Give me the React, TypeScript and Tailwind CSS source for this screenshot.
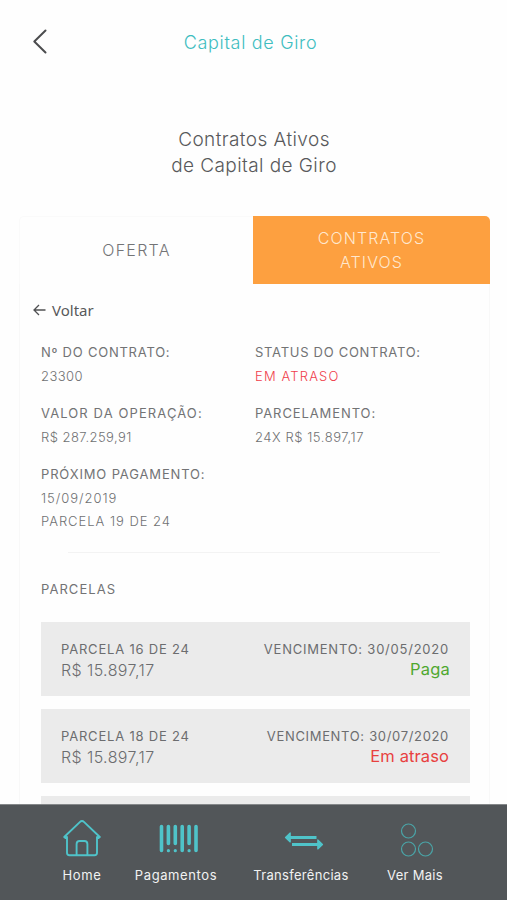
import { ReactNode } from 'react';

interface Installment {
  number: number;
  amount: string;
  dueDate: string;
  status: string;
  statusClass: string;
  dueClass: string;
}

const installments: Installment[] = [
  {
    number: 16,
    amount: 'R$ 15.897,17',
    dueDate: '30/05/2020',
    status: 'Paga',
    statusClass: 'text-[#4fa82f] tracking-[0.2px] -mr-px',
    dueClass: 'tracking-[0.77px]',
  },
  {
    number: 18,
    amount: 'R$ 15.897,17',
    dueDate: '30/07/2020',
    status: 'Em atraso',
    statusClass: 'text-[#e8403f] tracking-[0.1px]',
    dueClass: 'tracking-[0.67px]',
  },
];

interface FieldProps {
  label: string;
  labelClass: string;
  valueClass: string;
  children: ReactNode;
}

function Field({ label, labelClass, valueClass, children }: FieldProps) {
  return (
    <div>
      <p className={`mb-[2px] text-[13px] leading-[22px] text-[#727375] ${labelClass}`}>{label}</p>
      <div className={`text-[13px] leading-[23px] font-light text-[#707173] ${valueClass}`}>{children}</div>
    </div>
  );
}

function HomeIcon() {
  return (
    <svg width="38" height="38" viewBox="0 0 38 38" fill="none" stroke="#4fc3c9" strokeWidth="1.9" strokeLinecap="round" strokeLinejoin="round">
      <path d="M4 17 2.500 18.100 1.200 17 16.800 2.100a3.200 3.200 0 0 1 4.400 0L36.800 17 35.500 18.100 34 17V32.700a2.500 2.500 0 0 1-2.500 2.500H6.500A2.500 2.500 0 0 1 4 32.700z" />
      <path d="M13.600 35V24a3 3 0 0 1 3-3h4.800a3 3 0 0 1 3 3v11" />
    </svg>
  );
}

function BarcodeIcon() {
  return (
    <svg className="ml-[5px]" width="40" height="30" viewBox="0 0 40 30" fill="none" stroke="#4fc3c9" strokeWidth="3.600" strokeLinecap="round">
      <path d="M2.500 2.500v24M9.400 2.500v17M16.300 2.500v17M23.200 2.500v24M30.100 2.500v17M37 2.500v24" />
      <path d="M9.400 26.600v.1M16.300 26.600v.1M30.100 26.600v.1" strokeWidth="3.200" />
    </svg>
  );
}

function TransferIcon() {
  return (
    <svg className="mt-[4px] ml-[6px]" width="40" height="18" viewBox="0 0 40 18" fill="none" stroke="#4fc3c9" strokeWidth="2.800">
      <path d="M5 5.500h27.500M8 12.500h27" />
      <path d="M1.500 5.500 6.200 1v9zM38.500 12.500l-4.700-4.500v9z" fill="#4fc3c9" strokeWidth="1.200" strokeLinejoin="round" />
    </svg>
  );
}

function MoreIcon() {
  return (
    <svg className="mt-[2px] ml-[3px]" width="34" height="34" viewBox="0 0 34 34" fill="none" stroke="#4aa4a7" strokeWidth="1.200">
      <circle cx="8.500" cy="8" r="7" />
      <circle cx="8.500" cy="26" r="7" />
      <circle cx="25.500" cy="26" r="7" />
    </svg>
  );
}

const navItems = [
  { label: 'Home', icon: <HomeIcon />, className: 'w-[40px] ml-[62px] tracking-[0.6px]' },
  { label: 'Pagamentos', icon: <BarcodeIcon />, className: 'w-[84px] ml-[32px] tracking-[0.6px]' },
  { label: 'Transferências', icon: <TransferIcon />, className: 'w-[96px] ml-[35px] tracking-[0.3px]' },
  { label: 'Ver Mais', icon: <MoreIcon />, className: 'w-[58px] ml-[37px] tracking-[0.3px]' },
];

export default function App() {
  return (
    <div className="flex h-[900px] w-full flex-col overflow-hidden bg-[#fefefe] font-['Inter',sans-serif]">
      {/* Header */}
      <header className="grid h-[84px] shrink-0 grid-cols-[60px_1fr_66px] items-center">
        <button aria-label="Voltar" className="pl-[32px]">
          <svg width="16" height="26" viewBox="0 0 16 26" fill="none" stroke="#4b4c4e" strokeWidth="2" strokeLinecap="round" strokeLinejoin="round">
            <path d="M13.500 1.500 2.300 12.500l11.200 11" />
          </svg>
        </button>
        <h1 className="pt-px text-center text-[18px] font-light tracking-[0.68px] text-[#40bdc0]">Capital de Giro</h1>
      </header>

      <h2 className="mt-[43px] pl-px text-center text-[19px] leading-[26px] font-light tracking-[0.42px] text-[#58595b]">
        Contratos Ativos
        <br />
        de Capital de Giro
      </h2>

      {/* Tabs */}
      <div className="mr-[17px] mt-[37px] ml-[19px] grid h-[68px] shrink-0 grid-cols-[234px_1fr] text-[16px] font-light">
        <button className="rounded-tl-[5px] border-t border-l border-[#fafafa] pb-px tracking-[1.3px] text-[#737476]">OFERTA</button>
        <button className="rounded-tr-[5px] bg-[#fda040] leading-[24px] tracking-[1.1px] text-[#ffe8cf]">
          CONTRATOS
          <br />
          ATIVOS
        </button>
      </div>

      <main className="mr-[17px] ml-[19px] flex-1 overflow-hidden border-x border-[#f8f8f8]">
        <button className="mt-[15px] ml-[13px] flex h-[22px] items-center gap-[6px] font-['Noto_Sans',sans-serif] text-[15px] text-[#58595b]">
          <svg width="13" height="12" viewBox="0 0 13 12" fill="none" stroke="#505153" strokeWidth="1.300">
            <path d="M12.500 6H1M6 1 1 6l5 5" />
          </svg>
          Voltar
        </button>

        {/* Contract data */}
        <section className="mt-[20px] ml-[21px] grid grid-cols-[214px_1fr] gap-y-[14px]">
          <Field label="Nº DO CONTRATO:" labelClass="tracking-[0.77px]" valueClass="tracking-[0.45px]">
            23300
          </Field>
          <Field label="STATUS DO CONTRATO:" labelClass="tracking-[0.72px]" valueClass="tracking-[1.15px]">
            <span className="text-[#f03d4b]">EM ATRASO</span>
          </Field>
          <Field label="VALOR DA OPERAÇÃO:" labelClass="tracking-[1.1px]" valueClass="tracking-[0.45px]">
            R$ 287.259,91
          </Field>
          <Field label="PARCELAMENTO:" labelClass="tracking-[0.9px]" valueClass="tracking-[0.55px]">
            24X R$ 15.897,17
          </Field>
          <Field label="PRÓXIMO PAGAMENTO:" labelClass="tracking-[0.85px]" valueClass="tracking-[0.97px]">
            15/09/2019
            <br />
            PARCELA 19 DE 24
          </Field>
        </section>

        <hr className="mt-[19px] mr-[49px] ml-[48px] border-[#f3f3f3]" />

        {/* Installments */}
        <h3 className="mt-[25px] ml-[21px] text-[13px] leading-[22px] tracking-[1.05px] text-[#727375]">PARCELAS</h3>
        <ul className="mt-[22px] mr-[19px] ml-[21px] flex flex-col gap-[13px]">
          {installments.map((item) => (
            <li key={item.number} className="flex h-[74px] justify-between bg-[#ebebeb] pt-[17px] pr-[21px] pl-[20px] text-[#6c6d6f]">
              <div>
                <p className="text-[13px] leading-[20px] tracking-[0.8px]">PARCELA {item.number} DE 24</p>
                <p className="text-[16px] leading-[22px] font-light tracking-[0.4px]">{item.amount}</p>
              </div>
              <div className="text-right">
                <p className={`text-[13px] leading-[20px] ${item.dueClass}`}>VENCIMENTO: {item.dueDate}</p>
                <p className={`text-[16.5px] leading-[21px] ${item.statusClass}`}>{item.status}</p>
              </div>
            </li>
          ))}
          <li className="h-[74px] bg-[#ebebeb]" />
        </ul>
      </main>

      {/* Bottom navigation */}
      <nav className="flex h-[96px] shrink-0 border-t border-[#85888a] bg-[#525659] text-[13px] text-[#f1f2f2]">
        {navItems.map((item) => (
          <button key={item.label} className={`flex shrink-0 flex-col items-center whitespace-nowrap ${item.className}`}>
            <span className="mt-[12px] flex h-[43px] items-center">{item.icon}</span>
            <span className="mt-[5px] leading-[20px]">{item.label}</span>
          </button>
        ))}
      </nav>
    </div>
  );
}
